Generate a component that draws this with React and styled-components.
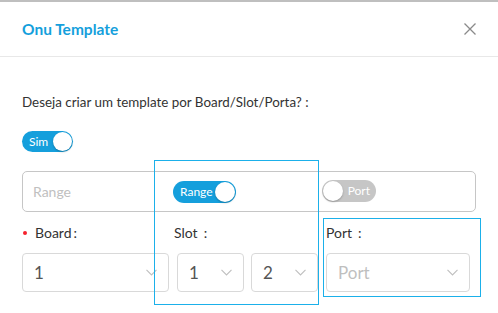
import React from "react";
import styled, { createGlobalStyle } from "styled-components";

const Global = createGlobalStyle`
  html, body { margin: 0; padding: 0; background: #fff; }
  body { font-family: Lato, "Noto Sans", "Liberation Sans", sans-serif; color: #333; }
  * { box-sizing: border-box; }
`;

const Page = styled.div`
  position: relative;
  width: 498px;
  height: 313px;
  overflow: hidden;
  background: #fff;
`;

const TopBar = styled.div`
  height: 2px;
  background: #bfbfbf;
`;

const Header = styled.div`
  height: 55px;
  padding: 0 22px;
  display: flex;
  align-items: center;
  justify-content: space-between;
  border-bottom: 1px solid #e8e8e8;
`;

const Title = styled.h1`
  margin: 0;
  font-size: 15.5px;
  font-weight: 700;
  color: #159fdc;
`;

const Close = styled.button`
  border: 0;
  background: none;
  padding: 0;
  width: 12px;
  height: 12px;
  display: flex;
  cursor: pointer;
`;

const Body = styled.div`
  padding: 35px 22px 0 22px;
`;

const Question = styled.p`
  margin: 0;
  font-size: 13.4px;
  line-height: 20px;
  color: #333;
`;

const Track = styled.div`
  display: inline-flex;
  align-items: center;
  flex-direction: ${(p) => (p.$on ? "row" : "row-reverse")};
  justify-content: space-between;
  height: ${(p) => p.$h}px;
  width: ${(p) => p.$w}px;
  border-radius: 12px;
  background: ${(p) => (p.$on ? "#159fdc" : "#c6c6c6")};
  padding: ${(p) => (p.$on ? "0 1px 0 7px" : "0 6px 0 1px")};
`;

const SwitchText = styled.span`
  color: #fff;
  font-size: 12px;
  line-height: 1;
`;

const Knob = styled.span`
  width: ${(p) => p.$h - 2}px;
  height: ${(p) => p.$h - 2}px;
  border-radius: 50%;
  background: #fff;
  box-shadow: 0 1px 2px rgba(0, 0, 0, 0.25);
`;

const Switch = ({ on, label, w, h = 22 }) => (
  <Track $on={on} $w={w} $h={h}>
    <SwitchText>{label}</SwitchText>
    <Knob $h={h} />
  </Track>
);

const SimRow = styled.div`
  margin-top: 19px;
  height: 21px;
  display: flex;
`;

const RangeBox = styled.div`
  margin-top: 19px;
  height: 41px;
  border: 1px solid #c6c6c6;
  border-radius: 5px;
  display: grid;
  grid-template-columns: 140px 149px 1fr;
  align-items: center;
  padding-left: 10px;
`;

const Placeholder = styled.span`
  font-size: 14px;
  color: #c0c0c0;
`;

const Fields = styled.div`
  margin-top: 11px;
  display: grid;
  grid-template-columns: 147px 144px 147px;
  column-gap: 5px;
`;

const PortCol = styled.div`
  margin-left: 3px;
`;

const Label = styled.div`
  height: 20px;
  line-height: 20px;
  font-size: 14px;
  color: #333;
  display: flex;
  align-items: center;
  margin-bottom: 10px;
  padding-left: ${(p) => p.$indent || 0}px;
`;

const Colon = styled.span`
  margin-left: ${(p) => p.$gap}px;
`;

const Req = styled.span`
  width: 4px;
  height: 4px;
  border-radius: 50%;
  background: #f5222d;
  margin-right: 8px;
`;

const SelectPair = styled.div`
  display: flex;
  gap: 7px;
  padding-left: 3px;
`;

const SelectBox = styled.div`
  height: 39px;
  width: ${(p) => (p.$w ? `${p.$w}px` : "100%")};
  border: 1px solid #d9d9d9;
  border-radius: 4px;
  display: flex;
  align-items: center;
  justify-content: space-between;
  padding: 0 11px 0 11px;
`;

const Value = styled.span`
  font-size: 17px;
  color: ${(p) => (p.$ph ? "#bfbfbf" : "#555")};
`;

const Chevron = () => (
  <svg width="11" height="7" viewBox="0 0 11 7">
    <path d="M0.5 0.8 L5.5 6 L10.5 0.8" fill="none" stroke="#bfbfbf" strokeWidth="1.1" />
  </svg>
);

const Select = ({ value, placeholder, w }) => (
  <SelectBox $w={w}>
    <Value $ph={!value}>{value || placeholder}</Value>
    <Chevron />
  </SelectBox>
);

const Highlight = styled.div`
  position: absolute;
  border: 1px solid #1bb0ea;
  pointer-events: none;
  left: ${(p) => p.$x}px;
  top: ${(p) => p.$y}px;
  width: ${(p) => p.$w}px;
  height: ${(p) => p.$h}px;
`;

export default function App() {
  return (
    <Page>
      <Global />
      <TopBar />
      <Header>
        <Title>Onu Template</Title>
        <Close aria-label="close">
          <svg width="12" height="12" viewBox="0 0 12 12">
            <path d="M0.5 0.5 L11.5 11.5 M11.5 0.5 L0.5 11.5" stroke="#8a8a8a" strokeWidth="1.3" />
          </svg>
        </Close>
      </Header>
      <Body>
        <Question>Deseja criar um template por Board/Slot/Porta? :</Question>
        <SimRow>
          <Switch on label="Sim" w={51} h={21} />
        </SimRow>
        <RangeBox>
          <Placeholder>Range</Placeholder>
          <div><Switch on label="Range" w={63} /></div>
          <div><Switch on={false} label="Port" w={54} /></div>
        </RangeBox>
        <Fields>
          <div>
            <Label $indent={1}><Req />Board<Colon $gap={2}>:</Colon></Label>
            <Select value="1" />
          </div>
          <div>
            <Label>Slot<Colon $gap={6}>:</Colon></Label>
            <SelectPair>
              <Select value="1" w={67} />
              <Select value="2" w={67} />
            </SelectPair>
          </div>
          <PortCol>
            <Label>Port<Colon $gap={6}>:</Colon></Label>
            <Select placeholder="Port" />
          </PortCol>
        </Fields>
      </Body>
      <Highlight $x={154} $y={160} $w={165} $h={145} />
      <Highlight $x={323} $y={218} $w={158} $h={79} />
    </Page>
  );
}
